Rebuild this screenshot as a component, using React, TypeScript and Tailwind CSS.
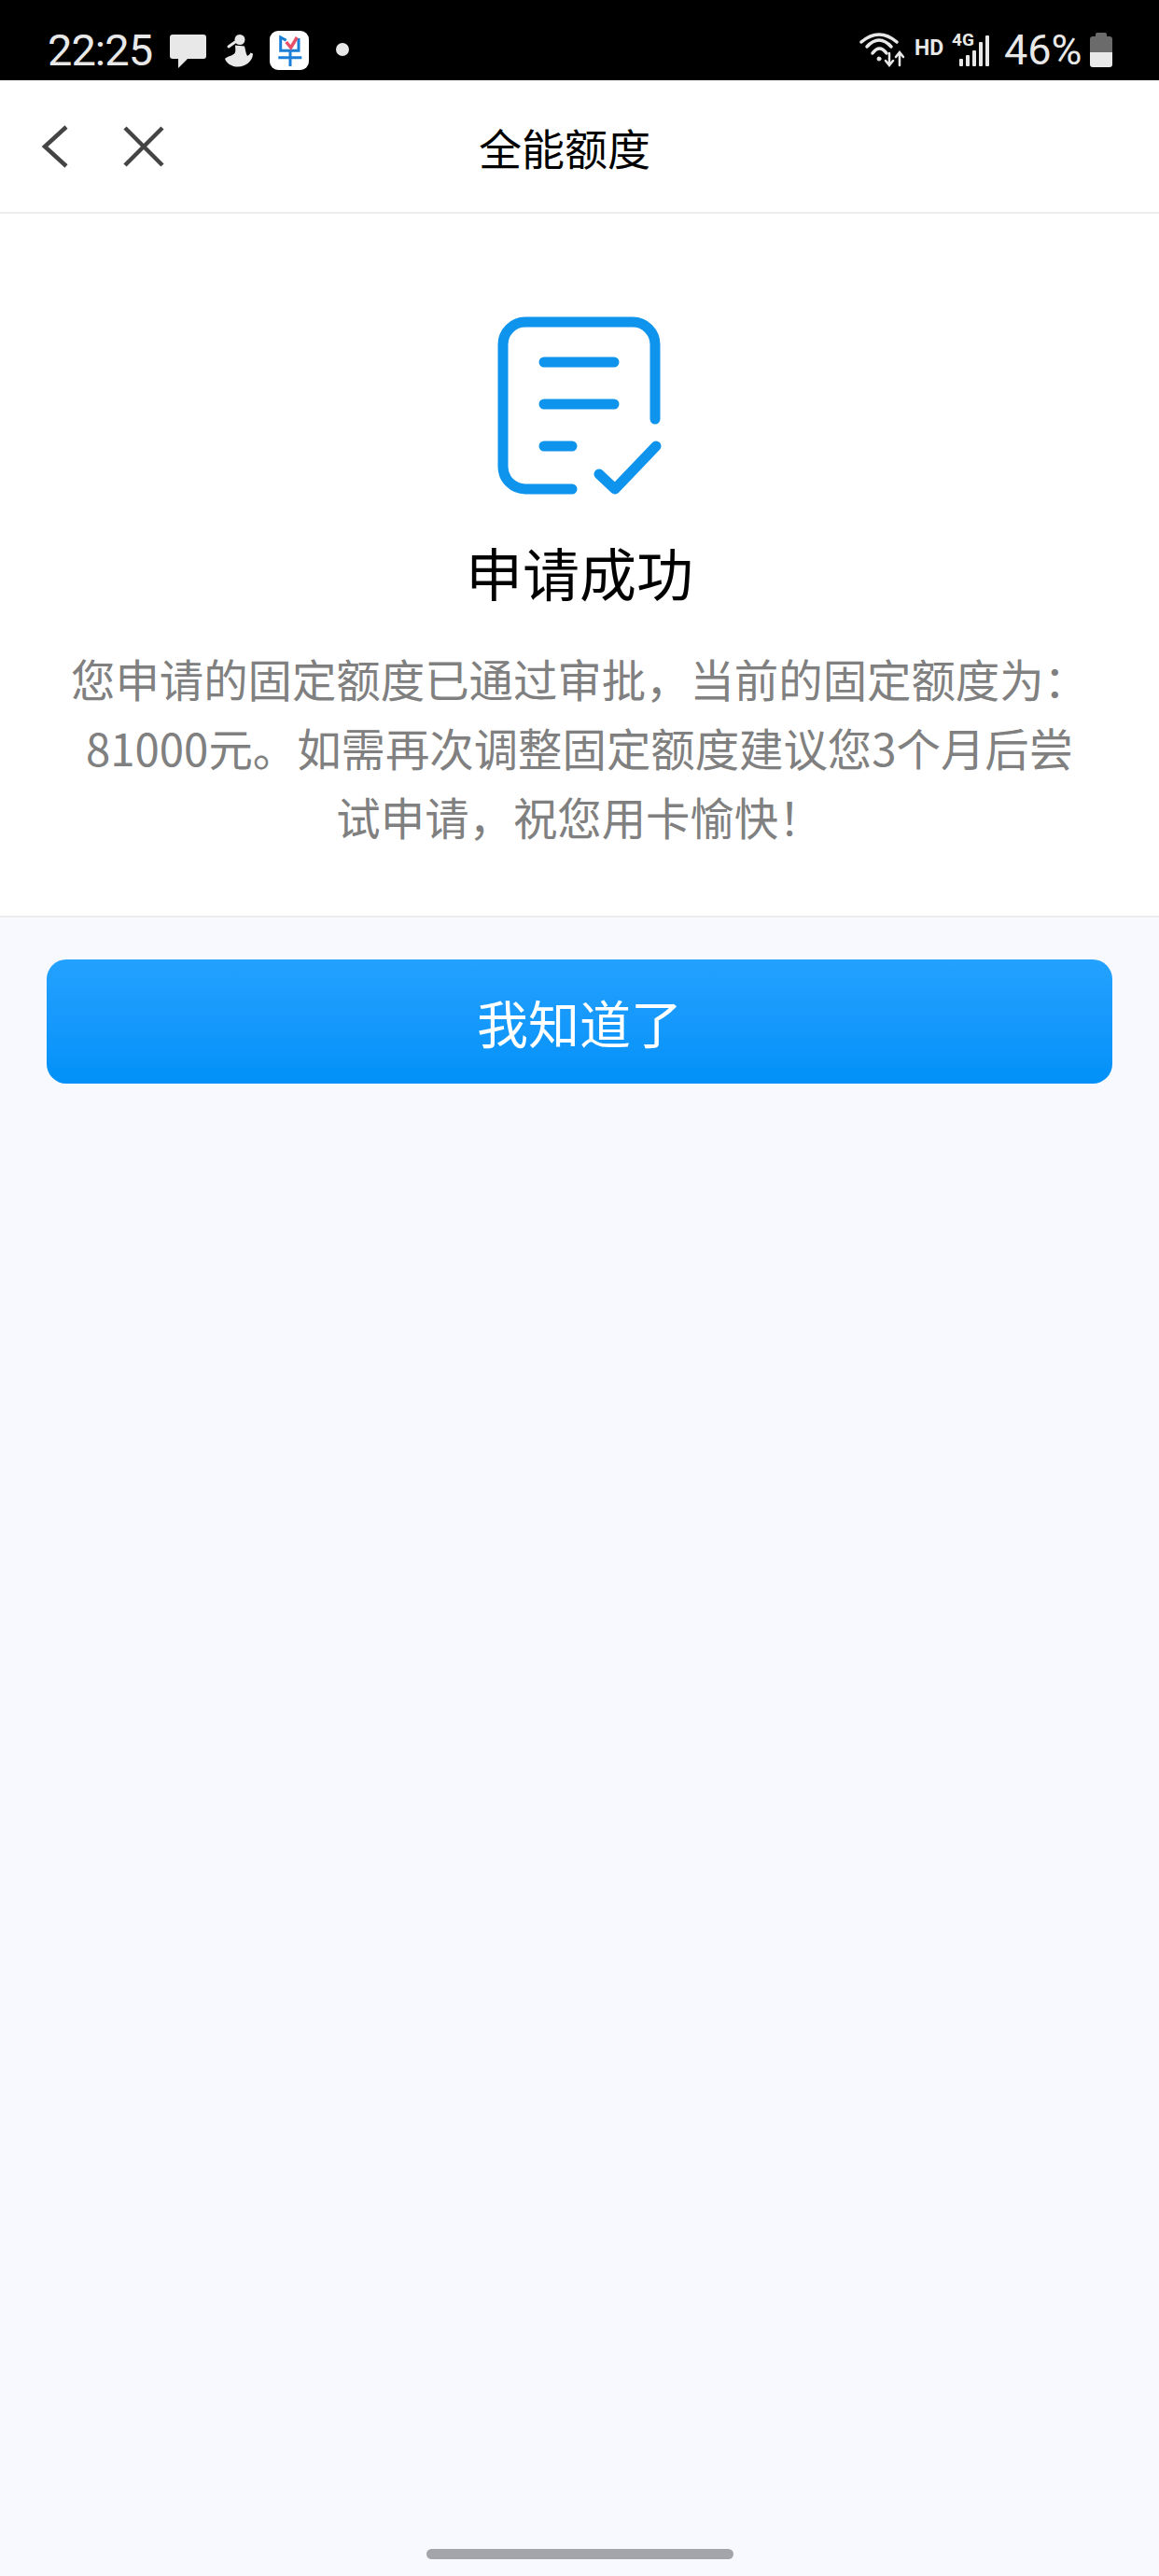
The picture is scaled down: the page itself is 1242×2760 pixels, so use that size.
const font = { fontFamily: '"Noto Sans CJK SC", "Noto Sans", sans-serif' };

function StatusBar() {
  return (
    <div className="relative h-[86px] bg-black text-[#e8e8e8]" style={{ fontFamily: 'Roboto, sans-serif' }}>
      <span className="absolute left-[51px] top-[29px] text-[47px] leading-[50px] tracking-[-1px]">22:25</span>
      <svg className="absolute left-[179px] top-[34px]" width="44" height="42" viewBox="0 0 44 42" fill="#e8e8e8">
        <path d="M6 3h33a3 3 0 0 1 3 3v20a3 3 0 0 1-3 3H22L12 39V29H6a3 3 0 0 1-3-3V6a3 3 0 0 1 3-3z" />
      </svg>
      <svg className="absolute left-[240px] top-[36px]" width="32" height="36" viewBox="0 0 32 36" fill="#e8e8e8">
        <circle cx="17" cy="6.5" r="5.5" />
        <path d="M12 12.5 22 13.5C23 17 23 20 25 24 26.5 23 28 22 28.5 20.5L31 21.5C31 27 27 32 22 34 17 36 12 36 8 34 5 33 2 30 1 27 4 24 9 24 11.5 21 13 19 12 15 12 12.5Z" />
        <path d="M5 14 12 9" stroke="#e8e8e8" strokeWidth="3" strokeLinecap="round" />
      </svg>
      <div className="absolute left-[289px] top-[33px] flex h-[42px] w-[42px] items-center justify-center rounded-[9px] bg-white">
        <svg width="30" height="36" viewBox="0 0 30 36" fill="none">
          <path d="M11.7 7.3 5.7 4v14.3H25V5" stroke="#1b7fd8" strokeWidth="3" />
          <path d="M3.3 25.7h25M16 18v17" stroke="#1b7fd8" strokeWidth="3" />
          <path d="M11.7 9l5 6L23.3 4" stroke="#e8506a" strokeWidth="3.5" />
        </svg>
      </div>
      <div className="absolute left-[360px] top-[46px] h-[14px] w-[14px] rounded-full bg-[#e8e8e8]" />

      <svg className="absolute left-[921px] top-[34px]" width="50" height="38" viewBox="0 0 50 38" fill="none" stroke="#e8e8e8" strokeLinecap="round">
        <path d="M2 11Q21-5 40 11" strokeWidth="3.5" />
        <path d="M8 16Q21 2 34 16" strokeWidth="3.5" />
        <path d="M14 23Q21.5 13 29 23" strokeWidth="3.5" />
        <circle cx="21" cy="29" r="2" fill="#e8e8e8" strokeWidth="1" />
        <path d="M32 23v12M28 31l4 5 4-5" strokeWidth="2.5" />
        <path d="M43 36V23M39 27l4-5 4 5" strokeWidth="2.5" />
      </svg>
      <span className="absolute left-[980px] top-[40px] text-[23px] font-bold leading-[24px]">HD</span>
      <span className="absolute left-[1020px] top-[33px] text-[19px] font-bold leading-[20px]">4G</span>
      <div className="absolute left-[1028px] top-[38px] flex h-[33px] items-end gap-[3px]">
        <div className="h-[8px] w-[4px] rounded-[1px] bg-[#e8e8e8]" />
        <div className="h-[12px] w-[4px] rounded-[1px] bg-[#e8e8e8]" />
        <div className="h-[17px] w-[4px] rounded-[1px] bg-[#e8e8e8]" />
        <div className="h-[26px] w-[4px] rounded-[1px] bg-[#e8e8e8]" />
        <div className="h-[33px] w-[4px] rounded-[1px] bg-[#e8e8e8]" />
      </div>
      <span className="absolute left-[1076px] top-[29px] text-[45px] leading-[50px]">46%</span>
      <div className="absolute left-[1168px] top-[35px] flex h-[37px] w-[24px] flex-col items-center">
        <div className="h-[4px] w-[12px] rounded-t-[2px] bg-[#6b6b6b]" />
        <div className="flex w-[24px] flex-1 flex-col overflow-hidden rounded-[3px]">
          <div className="h-[17px] bg-[#6b6b6b]" />
          <div className="flex-1 bg-[#e8e8e8]" />
        </div>
      </div>
    </div>
  );
}

function DocIcon() {
  return (
    <svg width="182" height="200" viewBox="0 0 182 200" fill="none" stroke="#0f94ee" strokeWidth="11" strokeLinecap="round" strokeLinejoin="round">
      <path d="M172 115V35a24 24 0 0 0-24-24H33A24 24 0 0 0 9 35v131a24 24 0 0 0 24 24h50" />
      <path d="M53 54h75M53 99h75M53 144h30" />
      <path d="M112 174l17 16 44-46" />
    </svg>
  );
}

export default function App() {
  return (
    <div className="relative flex min-h-[2760px] w-[1242px] flex-col bg-[#f8f9fe]" style={font}>
      <StatusBar />
      <div className="relative flex h-[143px] items-center justify-center border-b-2 border-[#ececec] bg-white pr-[32px]">
        <svg className="absolute left-[44px] top-[48px]" width="30" height="46" viewBox="0 0 30 46" fill="none" stroke="#444" strokeWidth="4.5">
          <path d="M27 2 4 23l23 21" />
        </svg>
        <svg className="absolute left-[131px] top-[48px]" width="46" height="46" viewBox="0 0 46 46" fill="none" stroke="#444" strokeWidth="4.5">
          <path d="M3 3l40 40M43 3 3 43" />
        </svg>
        <span className="text-[46px] leading-[60px] text-black">全能额度</span>
      </div>
      <div className="flex h-[754px] flex-col items-center border-b-2 border-[#ececec] bg-white pt-[105px]">
        <DocIcon />
        <h1 className="mt-[44px] text-[61px] font-normal leading-[70px] text-black">申请成功</h1>
        <p className="mt-[42px] w-[1160px] text-center text-[47.4px] leading-[74px] text-[#808080]">
          您申请的固定额度已通过审批，当前的固定额度为：
          <br />
          81000元。如需再次调整固定额度建议您3个月后尝
          <br />
          试申请，祝您用卡愉快！
        </p>
      </div>
      <div className="px-[50px] pt-[45px]">
        <button className="h-[133px] w-full rounded-[21px] bg-gradient-to-b from-[#23a1ff] to-[#0091f8] text-[55px] text-white">
          我知道了
        </button>
      </div>
      <div className="absolute bottom-[18px] left-[457px] h-[11px] w-[329px] rounded-full bg-[#a3a5ab]" />
    </div>
  );
}
